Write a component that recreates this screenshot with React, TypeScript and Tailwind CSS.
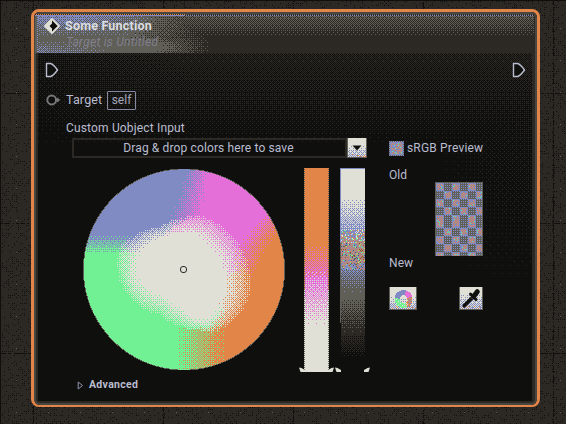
import React, { useMemo } from "react";

const INK = "#0f0f0d";
const SOOT = "#2c2925";
const GRAY = "#5f5e57";
const BLUE = "#808bc3";
const PINK = "#e56fd8";
const ORANGE = "#e28548";
const GREEN = "#72f194";
const BONE = "#e0e0d7";

type Shade = (x: number, y: number, t: number) => string | null;

const BAYER = [
  [0, 32, 8, 40, 2, 34, 10, 42],
  [48, 16, 56, 24, 50, 18, 58, 26],
  [12, 44, 4, 36, 14, 46, 6, 38],
  [60, 28, 52, 20, 62, 30, 54, 22],
  [3, 35, 11, 43, 1, 33, 9, 41],
  [51, 19, 59, 27, 49, 17, 57, 25],
  [15, 47, 7, 39, 13, 45, 5, 37],
  [63, 31, 55, 23, 61, 29, 53, 21],
];

const clamp = (v: number) => Math.max(0, Math.min(1, v));
const ramp = (v: number, a: number, b: number) => clamp((v - a) / (b - a));

/** Integer hash of a pixel position, in the range 0 to 1. */
const noise = (x: number, y: number) => {
  let h = Math.imul(x + 11, 374761393) ^ Math.imul(y + 7, 668265263);
  h = Math.imul(h ^ (h >>> 13), 1274126177);
  h ^= h >>> 16;
  return (h >>> 0) / 4294967296;
};

/** Draws an ordered-dither texture, one path per row and palette colour. */
function Dither({ w, h, shade, className = "" }: { w: number; h: number; shade: Shade; className?: string }) {
  const rows = useMemo(() => {
    const list: { key: string; fill: string; d: string }[] = [];
    for (let y = 0; y < h; y++) {
      const out: Record<string, string> = {};
      let x = 0;
      while (x < w) {
        const c = shade(x, y, (BAYER[y & 7][x & 7] + 0.5) / 64);
        let n = 1;
        while (x + n < w && shade(x + n, y, (BAYER[y & 7][(x + n) & 7] + 0.5) / 64) === c) n++;
        if (c) out[c] = (out[c] || "") + `M${x} ${y}h${n}v1h-${n}z`;
        x += n;
      }
      for (const fill of Object.keys(out)) list.push({ key: y + fill, fill, d: out[fill] });
    }
    return list;
  }, [w, h, shade]);
  return (
    <svg width={w} height={h} className={`block shrink-0 ${className}`}>
      {rows.map((r) => (
        <path key={r.key} fill={r.fill} d={r.d} />
      ))}
    </svg>
  );
}

const backdrop: Shade = (x, y) => {
  if (x === 0 || y === 0) return INK;
  const n = noise(x, y);
  if ((x - 33) % 130 === 0 || (y - 93) % 130 === 0) return n < 0.75 ? INK : SOOT;
  if (x % 32 === 16 && y % 32 === 28) return GRAY;
  return x % 2 === 0 && y % 2 === 1 && n < 0.27 ? INK : null;
};

const header: Shade = (x, y, t) => {
  if (y === 0) return x % 2 ? (x < 150 ? ORANGE : GRAY) : SOOT;
  if (y === 1) return x < 150 || x % 2 ? BLUE : SOOT;
  if (x < 3) return x === 2 ? (y % 2 ? BLUE : GRAY) : GRAY;
  if (x < 145) {
    const glow = Math.max(0.72 * ramp(x, 120, 45) * ramp(y, 24, 4), 0.5 * ramp(y, 26, 38) * ramp(x, 75, 5));
    if (t < glow) return BLUE;
  }
  const lit = Math.max(
    ramp(x, 195 - y, 115 - y),
    0.8 * ramp(y, 23, -1),
    1.2 * ramp(y, 14, 30) * ramp(x, 175, 115) * ramp(y, 44, 36),
  );
  return t < lit ? GRAY : SOOT;
};

const bodyTop: Shade = (x, y, t) => {
  const k = 0.62 * ramp(y, 92, -8) * (0.4 + 0.6 * ramp(x, 0, 150));
  return t < k ? SOOT : null;
};

const bodySide: Shade = (x, y, t) => (t < 0.22 * ramp(x, 0, 90) * ramp(y, 170, 10) ? SOOT : null);

// White core of the wheel: angle, inner radius, outer radius.
const CORE = [
  [-180, 47, 67], [-160, 46, 70], [-145, 42, 60], [-120, 36, 50], [-95, 34, 52], [-70, 35, 57],
  [-45, 34, 58], [-20, 35, 62], [0, 38, 66], [20, 43, 71], [45, 49, 72], [65, 53, 70],
  [78, 50, 62], [95, 37, 57], [120, 31, 52], [145, 37, 60], [165, 45, 65], [180, 47, 67],
];

const wheel: Shade = (x, y, t) => {
  const dx = x - 100.5;
  const dy = y - 101;
  const r = Math.hypot(dx, dy);
  if (r > 101) return null;
  if (r > 100.2) return GRAY;
  const a = (Math.atan2(dy, dx) * 180) / Math.PI;
  let i = 0;
  while (i < CORE.length - 2 && CORE[i + 1][0] < a) i++;
  const f = ramp(a, CORE[i][0], CORE[i + 1][0]);
  const inner = CORE[i][1] + (CORE[i + 1][1] - CORE[i][1]) * f;
  const outer = CORE[i][2] + (CORE[i + 1][2] - CORE[i][2]) * f;
  if (t < Math.pow(ramp(r, outer, inner), 0.65)) return BONE;
  const u = 1 - t;
  if (a < -55 && a > -135) return u < ramp(x, 104 - y * 0.35, 126 - y * 0.15) ? PINK : BLUE;
  if (a >= -55 && a < 45) {
    const from = y < 82 ? 182 - 0.85 * (y - 44) : y < 100 ? 150 : 150 - 0.9 * (y - 100);
    const to = y < 82 ? 201 - 0.7 * (y - 56) : 183 - 0.5 * (y - 82);
    return u < ramp(x, from, to) || y > 128 ? ORANGE : PINK;
  }
  if (a >= 45 && a < 135) return u < ramp(x, 142, 93) ? GREEN : ORANGE;
  return u < ramp(y, 86, 66) ? BLUE : GREEN;
};

const hueBar: Shade = (x, y, t) => {
  if (x === 0 || x === 24) return y % 2 ? GRAY : y > 120 ? BONE : ORANGE;
  if (t < Math.pow(ramp(y, 102, 158), 0.9)) return BONE;
  return 1 - t < ramp(y, 74, 118) ? PINK : ORANGE;
};

const valueBar: Shade = (x, y, t) => {
  if (y === 0) return BLUE;
  if (x === 0) return y < 75 ? BLUE : y < 155 ? GRAY : null;
  if (y < 62) return t < ramp(y, 28, 72) ? BLUE : BONE;
  if (y < 102) {
    const n = noise(x, y);
    const k = ramp(y, 56, 72) * ramp(y, 106, 92);
    if (n < 0.09 * k) return GREEN;
    if ((x + y) % 2 && n < 0.85 * k) return ORANGE;
    return n > 0.88 ? (y < 75 ? BONE : GRAY) : BLUE;
  }
  if (y < 130) return t < ramp(y, 86, 124) ? GRAY : BLUE;
  if (y < 165) return t < ramp(y, 128, 164) ? SOOT : GRAY;
  return t < ramp(y, 163, 190) ? null : SOOT;
};

const ROWS = [0, 8, 16, 24, 32, 45, 53, 61, 69];
const checker: Shade = (x, y) => {
  if (y === 0 || x === 47 || x === 0) return GRAY;
  let row = 0;
  while (row < 8 && y > ROWS[row + 1]) row++;
  const lx = (x - 1) & 7;
  const ly = y - ROWS[row];
  if ((Math.floor((x - 1) / 8) + row) % 2 === 0) {
    if (lx > 0 && lx < 7 && ly > 1 && ly < (row === 4 ? 13 : 8) && (x + y) % 2 === 0) {
      const n = noise(x, y);
      return n < 0.12 ? GREEN : n < 0.88 ? ORANGE : BLUE;
    }
    return BLUE;
  }
  return lx % 2 === 1 && ly % 2 === 1 ? BLUE : GRAY;
};

const checkbox: Shade = (x, y) => {
  if (x === 0 || y === 0 || x === 14 || y === 14) return (x + y) % 2 ? GRAY : BLUE;
  if (x > 1 && x < 13 && y > 1 && y < 13 && (x + y) % 2) {
    const n = noise(x, y);
    return n < 0.16 ? GREEN : n < 0.8 ? ORANGE : BLUE;
  }
  return BLUE;
};

const paper = (h: number, w: number, from: number): Shade => (x, y, t) => {
  if (x === 0 || y === h - 1 || x === w - 1) return GRAY;
  if (y > h - 5 && noise(x, y) < 0.16) return ORANGE;
  return t < 0.65 * ramp(y, from, h) ? BLUE : BONE;
};
const arrowFace = paper(20, 20, 6);
const wheelFace = paper(23, 28, 8);
const pickFace = paper(23, 24, 4);

const miniWheel: Shade = (x, y, t) => {
  const dx = x - 9;
  const dy = y - 8.5;
  const r = Math.hypot(dx, dy);
  if (r > 9 || r < 3.8) return null;
  const a = (Math.atan2(dy, dx) * 180) / Math.PI;
  if (a < -75 && a > -175) return BLUE;
  if (a >= -75 && a < -15) return PINK;
  if (a >= -15 && a < 65) return t < 0.6 ? ORANGE : dx > 4 ? BLUE : BONE;
  return t < 0.85 ? GREEN : BONE;
};

function ExecPin() {
  return (
    <svg width="14" height="16" viewBox="0 0 14 16" className="block">
      <path d="M1.5 1.5h4.2Q8.5 2.5 12.5 8Q8.5 13.5 5.7 14.5H1.5z" fill={INK} stroke="#babdcf" strokeWidth="1.4" strokeLinejoin="round" />
    </svg>
  );
}

function Handle({ flip = false }: { flip?: boolean }) {
  return (
    <svg width="6" height="5" className={flip ? "block -scale-x-100" : "block"}>
      <path d="M0 0.5L2.5 1L6 3V5H1.5z" fill={BONE} />
    </svg>
  );
}

function Slider({ shade, width, height }: { shade: Shade; width: number; height: number }) {
  return (
    <div className="relative h-[204px] shrink-0">
      <Dither w={width} h={height} shade={shade} />
      <div className="absolute -left-[5px] -right-[5px] bottom-0 flex justify-between">
        <Handle />
        <Handle flip />
      </div>
    </div>
  );
}

export default function App() {
  return (
    <div
      className="relative h-[424px] w-[566px] overflow-hidden bg-[#2c2925] pl-[31px] pt-[9px] text-[12px] leading-4 text-[#babdd0]"
      style={{ fontFamily: 'Roboto, "Noto Sans", sans-serif' }}
    >
      <Dither w={566} h={424} shade={backdrop} className="absolute left-0 top-0" />

      <section className="relative h-[398px] w-[509px] overflow-hidden rounded-[8px] border-[3px] border-b-2 border-[#e28548] bg-[#2c2925]">
        <div className="absolute inset-0 rounded-[6px] border-2 border-[#484640]" />
        <div className="absolute bottom-[4px] left-[4px] right-[5px] top-[41px] bg-[#0f0f0d]">
          <Dither w={494} h={92} shade={bodyTop} />
          <Dither w={94} h={180} shade={bodySide} className="absolute right-0 top-[60px]" />
        </div>

        <div className="relative flex h-full flex-col">
          <header className="relative h-[41px] shrink-0 pl-[1px] pt-[2px]">
            <Dither w={499} h={39} shade={header} className="absolute left-[1px] top-[2px]" />
            <div className="relative flex h-[23px] items-center pl-[9px]">
              <svg width="16" height="16" viewBox="0 0 16 16" className="shrink-0">
                <path d="M8 1L15 8L8 15L1 8z" fill={INK} stroke={BONE} strokeWidth="1.8" strokeLinejoin="round" />
                <path d="M8 1.5L1.5 8L8 14.5V10.5L5.5 8L8 5.5z" fill={BONE} />
              </svg>
              <h1 className="ml-[5px] text-[12.5px] font-bold tracking-[0.2px] text-[#dcddde]">Some Function</h1>
            </div>
            <p className="relative -mt-[3px] pl-[31px] text-[12px] italic tracking-[0.25px] text-[#807f8c]">Target is Untitled</p>
          </header>

          <div className="flex h-[34px] shrink-0 items-center justify-between pl-[11px] pr-[11px]">
            <ExecPin />
            <ExecPin />
          </div>

          <div className="flex h-[26px] shrink-0 items-center pl-[12px]">
            <svg width="15" height="12" viewBox="0 0 15 12" className="shrink-0">
              <circle cx="5.7" cy="6" r="4.4" fill={INK} stroke="#77777a" strokeWidth="2" />
              <path d="M11 3.5L14.3 6L11 8.5z" fill="#77777a" />
            </svg>
            <span className="ml-[5px] w-[41px] text-[12.5px] tracking-[0.15px]">Target</span>
            <span className="flex h-[19px] w-[29px] items-center justify-center rounded-[1px] border border-[#8589a2] text-[12px] text-[#a2a5b8]">
              self
            </span>
          </div>

          <div className="mt-[7px] h-[18px] shrink-0 pl-[32px] text-[12px] tracking-[0.16px]">Custom Uobject Input</div>

          <div className="flex h-[20px] shrink-0 items-center pl-[38px]">
            <div className="flex h-[20px] w-[275px] items-center justify-center border-2 border-[#2c2925] pr-[2px] text-[12px] tracking-[0.13px]">
              Drag &amp; drop colors here to save
            </div>
            <div className="relative h-[20px] w-[20px]">
              <Dither w={20} h={20} shade={arrowFace} />
              <svg width="10" height="6" className="absolute left-[5px] top-[7px]">
                <path d="M0.5 0.5h9L5 5.5z" fill={INK} />
              </svg>
            </div>
            <div className="ml-[22px] flex items-center gap-[3px]">
              <Dither w={15} h={15} shade={checkbox} />
              <span className="whitespace-nowrap text-[12px] tracking-[0.18px]">sRGB Preview</span>
            </div>
          </div>

          <div className="mt-[10px] flex h-[204px] shrink-0 items-start pl-[49px]">
            <div className="relative">
              <Dither w={202} h={203} shade={wheel} />
              <div className="absolute left-[97px] top-[98px] h-[7px] w-[7px] rounded-[3px] border-[1.5px] border-[#2c2925] bg-[#e0e0d7]" />
            </div>
            <div className="ml-[19px] flex gap-[11px]">
              <Slider shade={hueBar} width={25} height={204} />
              <Slider shade={valueBar} width={25} height={190} />
            </div>
            <div className="ml-[24px] w-[94px]">
              <div className="-mt-px flex h-[88px]">
                <span className="w-[46px]">Old</span>
                <Dither w={48} h={74} shade={checker} className="mt-[15px]" />
              </div>
              <div className="h-[32px] tracking-[0.1px]">New</div>
              <div className="flex justify-between">
                <div className="relative">
                  <Dither w={28} h={23} shade={wheelFace} />
                  <Dither w={19} h={18} shade={miniWheel} className="absolute left-[5px] top-[3px]" />
                </div>
                <div className="relative">
                  <Dither w={24} h={23} shade={pickFace} />
                  <svg width="24" height="23" viewBox="0 0 24 23" className="absolute left-0 top-0">
                    <path d="M5.2 18.8L15 9" stroke={INK} strokeWidth="3.6" strokeLinecap="round" />
                    <path d="M11.5 7L17 12.5" stroke={INK} strokeWidth="3" strokeLinecap="round" />
                    <path d="M15 9L18.3 4.7" stroke={INK} strokeWidth="5" strokeLinecap="round" />
                    <path d="M12 10.5L13.5 12" stroke={GRAY} strokeWidth="1" />
                  </svg>
                </div>
              </div>
            </div>
          </div>

          <div className="mt-[5px] flex h-[16px] shrink-0 items-center pl-[43px]">
            <svg width="7" height="9" className="shrink-0">
              <path d="M1.2 1L5.5 4.5L1.2 8z" fill="none" stroke="#9195ad" />
            </svg>
            <span className="ml-[5px] text-[10.5px] font-bold tracking-[0.32px]">Advanced</span>
          </div>
        </div>
      </section>
    </div>
  );
}
